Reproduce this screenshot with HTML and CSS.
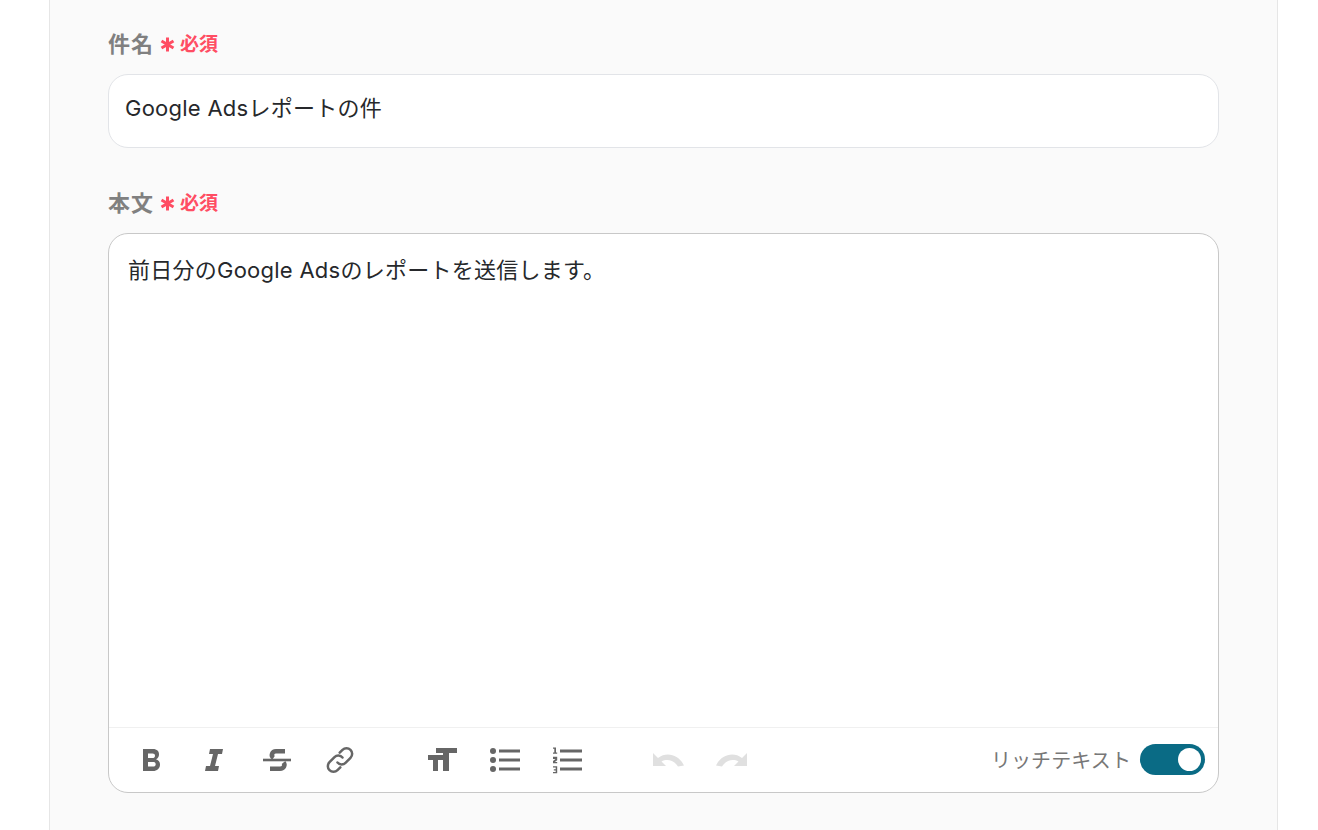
FILE: index.html
```html
<!DOCTYPE html>
<html lang="ja">
<head>
<meta charset="utf-8">
<title>フォーム</title>
<link rel="stylesheet" href="styles.css">
</head>
<body>
<main class="panel">
  <section class="field">
    <div class="label"><span class="label-text">件名</span><svg class="star" viewBox="0 0 14 14"><path d="M7 0.500v13M1.400 3.700l11.200 6.600M12.600 3.700L1.400 10.300"/></svg><span class="req">必須</span></div>
    <div class="input">Google Adsレポートの件</div>
  </section>
  <section class="field">
    <div class="label"><span class="label-text">本文</span><svg class="star" viewBox="0 0 14 14"><path d="M7 0.500v13M1.400 3.700l11.200 6.600M12.600 3.700L1.400 10.300"/></svg><span class="req">必須</span></div>
    <div class="editor">
      <div class="editor-body">前日分のGoogle Adsのレポートを送信します。</div>
      <div class="toolbar">
        <div class="tools">
          <svg class="icon" viewBox="0 0 32 32"><path class="fill" d="M7 5h10c4 0 6 2.300 6 5.500 0 2-1 3.800-3 4.800 2.500.8 4 2.700 4 5.200 0 4-3 6.500-7 6.500H7zM12 9.500V14h4.500c1.500 0 2.500-.8 2.500-2.300s-1-2.200-2.500-2.200zM12 18v4.500h5c1.700 0 2.700-.8 2.700-2.300S18.700 18 17 18z"/></svg>
          <svg class="icon" viewBox="0 0 32 32"><path class="fill" d="M11 5h13l-1 5h-4l-3 12h4l-1 5H6l1-5h4l3-12h-4z"/></svg>
          <svg class="icon" viewBox="0 0 32 32"><path class="fill" d="M1 14.700h28v2.600H1z"/><g class="thick"><path d="M23 7.300h-9c-4 0-5.500 4.500-2.500 6.500"/><path d="M8 24.700h10c4 0 5.500-3.700 3.500-6.200"/></g></svg>
          <svg class="icon" viewBox="0 0 32 32"><g class="line"><path d="M12.500 18.500a5.500 5.500 0 0 0 8 .3l5-5a5.600 5.600 0 0 0-8-8l-2.800 2.800"/><path d="M17.500 13.500a5.500 5.500 0 0 0-8-.3l-5 5a5.600 5.600 0 0 0 8 8l2.800-2.800"/></g></svg>
        </div>
        <div class="tools">
          <svg class="icon" viewBox="0 0 32 32"><path class="fill" d="M10 4h21v5h-8v18h-6V9h-7z"/><path class="fill" d="M2 11h15v5h-5v11H7V16H2z"/></svg>
          <svg class="icon" viewBox="0 0 32 32"><circle class="fill" cx="4" cy="7" r="3"/><circle class="fill" cx="4" cy="16" r="3"/><circle class="fill" cx="4" cy="25" r="3"/><path class="fill" d="M10 5.500h21v3H10zM10 14.500h21v3H10zM10 23.500h21v3H10z"/></svg>
          <svg class="icon" viewBox="0 0 32 32"><path class="fill" d="M8 5.500h22v3H8zM8 14.500h22v3H8zM8 23.500h22v3H8z"/><path class="fill" d="M1 3.500h3v5h1.200v1.300H1V8.500h1.300V4.800H1zM1 12.800h4.200v3.400l-2.400 1.800h2.400v1.200H1v-2.300l2.500-2H1zM1 22.300h4.200v7H1V28h2.700v-1.600H1.800v-1.100h1.900v-1.700H1z"/></svg>
        </div>
        <div class="tools">
          <svg class="icon icon-off" viewBox="0 0 32 32"><path class="fill" d="M0 9v13h13l-4.500-4.500c5.500-3 12.500-1.500 16.500 5l6-1C26 11 14 7 5 14z"/></svg>
          <svg class="icon icon-off" viewBox="0 0 32 32"><path class="fill" d="M31 9v13H18l4.500-4.500c-5.500-3-12.500-1.500-16.500 5l-6-1C5 11 17 7 26 14z"/></svg>
        </div>
        <div class="rich">
          <span class="rich-label">リッチテキスト</span>
          <span class="switch"><span class="knob"></span></span>
        </div>
      </div>
    </div>
  </section>
</main>
</body>
</html>
```
FILE: styles.css
```css
* { box-sizing: border-box; }
html, body { margin: 0; height: 830px; overflow: hidden; background: #fff; }
body {
  padding-left: 49px;
  font-family: Inter, "Noto Sans CJK JP", sans-serif;
  color: #26282b;
}
.panel {
  width: 1229px;
  height: 830px;
  padding: 27px 58px 0;
  background: #fafafa;
  border-left: 1px solid #e6e6e6;
  border-right: 1px solid #e6e6e6;
}
.field { margin-bottom: 38px; }
.label {
  display: flex;
  align-items: center;
  height: 30px;
  margin-bottom: 17px;
}
.label-text { font-size: 22px; font-weight: 700; letter-spacing: 1px; color: #808080; }
.star {
  flex: none;
  width: 15px;
  height: 15px;
  margin: 5px 0 0 6px;
  fill: none;
  stroke: #ff4d63;
  stroke-width: 2.800;
}
.req { margin-left: 5px; font-size: 19px; font-weight: 700; color: #ff4d63; }
.input {
  height: 74px;
  padding: 0 16px 10px;
  display: flex;
  align-items: center;
  font-size: 22px;
  letter-spacing: 0.25px;
  background: #fff;
  border: 1px solid #e2e4e8;
  border-radius: 20px;
}
.editor {
  height: 560px;
  display: flex;
  flex-direction: column;
  background: #fff;
  border: 1px solid #c8c8c8;
  border-radius: 20px;
  overflow: hidden;
}
.editor-body {
  flex: 1;
  padding: 21px 19px;
  font-size: 22px;
  line-height: 30px;
  letter-spacing: 0.25px;
}
.toolbar {
  height: 65px;
  padding: 0 13px 0 27px;
  display: flex;
  align-items: center;
  gap: 69px;
  border-top: 1px solid #f0f0f0;
}
.tools { display: flex; align-items: center; gap: 31px; }
.icon { display: block; flex: none; width: 32px; height: 32px; }
.fill { fill: #666; fill-rule: evenodd; }
.line { fill: none; stroke: #666; stroke-width: 2.500; stroke-linecap: round; }
.thick { fill: none; stroke: #666; stroke-width: 4.600; }
.icon-off .fill { fill: #e0e0e0; }
.rich { margin: 0 0 2px auto; display: flex; align-items: center; gap: 9px; }
.rich-label { font-size: 20px; letter-spacing: 0.1px; color: #777; }
.switch {
  width: 65px;
  height: 31px;
  padding: 4px;
  display: flex;
  justify-content: flex-end;
  background: #0a6b85;
  border-radius: 16px;
}
.knob { width: 23px; height: 23px; background: #fff; border-radius: 50%; }
```
